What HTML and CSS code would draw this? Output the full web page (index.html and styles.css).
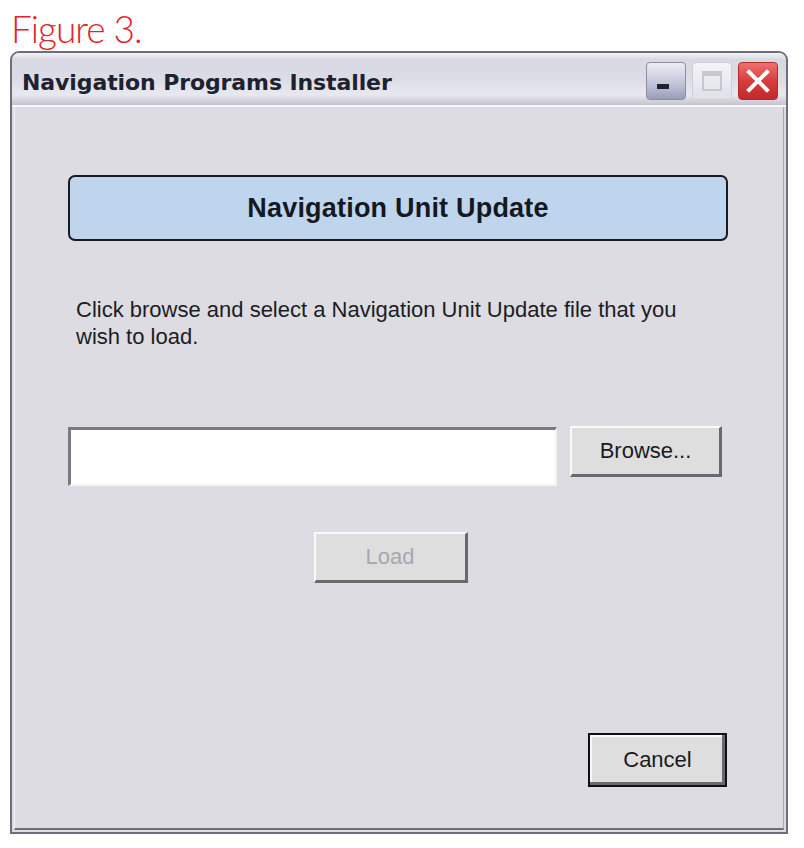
FILE: index.html
```html
<!DOCTYPE html>
<html lang="en">
<head>
    <meta charset="UTF-8">
    <title>Navigation Programs Installer</title>
    <link rel="stylesheet" href="styles.css">
</head>
<body>
    <div class="caption">Figure 3.</div>

    <div class="window">
        <!-- Title bar -->
        <div class="titlebar">
            <span class="title">Navigation Programs Installer</span>
            <div class="controls">
                <div class="ctl ctl-min"><span class="min-bar"></span></div>
                <div class="ctl ctl-max"><span class="max-box"></span></div>
                <div class="ctl ctl-close">
                    <svg width="26" height="26" viewBox="0 0 26 26">
                        <path d="M4 4 L22 22 M22 4 L4 22" stroke="#fff" stroke-width="4" stroke-linecap="square"/>
                    </svg>
                </div>
            </div>
        </div>

        <!-- Client area -->
        <div class="client">
            <div class="banner">Navigation Unit Update</div>

            <p class="intro">Click browse and select a Navigation Unit Update file that you wish to load.</p>

            <div class="file-row">
                <div class="file-input"></div>
                <button class="btn btn-browse">Browse...</button>
            </div>

            <div class="load-row">
                <button class="btn btn-load" disabled>Load</button>
            </div>

            <div class="bottom-row">
                <button class="btn btn-cancel">Cancel</button>
            </div>
        </div>
    </div>
</body>
</html>
```

FILE: styles.css
```css
body {
    margin: 0;
    background: #fff;
    font-family: "Liberation Sans", Arial, sans-serif;
}
.caption {
    font-family: Lato, "Liberation Sans", sans-serif;
    font-weight: 300;
    font-size: 37px;
    color: #e3232b;
    line-height: 1;
    padding: 10px 0 0 11px;
    height: 41px;
    letter-spacing: -1px;
}
.window {
    margin-left: 10px;
    width: 774px;
    height: 779px;
    border: 2px solid #6e6e7a;
    border-radius: 9px 9px 0 0;
    background: #dcdce2;
    display: flex;
    flex-direction: column;
}
.titlebar {
    height: 52px;
    display: flex;
    align-items: center;
    justify-content: space-between;
    padding: 0 6px 0 10px;
    border-radius: 7px 7px 0 0;
    background: linear-gradient(to bottom, #f4f4f8 0%, #d8d8e2 12%, #dcdce6 50%, #e8e8f0 80%, #c4c4ce 100%);
    border-bottom: 2px solid #f6f6fa;
}
.title {
    font-family: "DejaVu Sans", Verdana, sans-serif;
    font-weight: bold;
    font-size: 22px;
    color: #1e2230;
    letter-spacing: -0.1px;
    padding-top: 6px;
}
.controls {
    display: flex;
    gap: 6px;
    padding-top: 4px;
    margin-right: 2px;
}
.ctl {
    width: 40px;
    height: 38px;
    border-radius: 4px;
    box-sizing: border-box;
    position: relative;
    display: flex;
    align-items: center;
    justify-content: center;
}
.ctl-min {
    background: linear-gradient(to bottom, #eeeef6, #c0c2d6 60%, #9a9cb8);
    border: 1px solid #8a8ca6;
}
.min-bar {
    position: absolute;
    left: 10px;
    bottom: 10px;
    width: 12px;
    height: 5px;
    background: #1e2230;
}
.ctl-max {
    background: linear-gradient(to bottom, #f4f4f8, #e0e0ea);
    border: 1px solid #d0d0da;
}
.max-box {
    width: 20px;
    height: 20px;
    border: 2px solid #c8c8d2;
    border-top-width: 5px;
    box-sizing: border-box;
}
.ctl-close {
    background: linear-gradient(to bottom, #f07070, #d83c3c 50%, #c02a2a);
    border: 1px solid #b02a2a;
}
.client {
    flex: 1;
    margin: 0 2px 2px 2px;
    border-left: 1px solid #f2f2f6;
    border-right: 1px solid #a8a8b4;
    border-bottom: 2px solid #6e6e7a;
    padding: 68px 55px 0 53px;
    display: flex;
    flex-direction: column;
}
.banner {
    height: 62px;
    border: 2px solid #1a1a22;
    border-radius: 7px;
    background: #bed5ed;
    display: flex;
    align-items: center;
    justify-content: center;
    font-weight: bold;
    font-size: 27px;
    color: #141820;
    letter-spacing: 0.2px;
}
.intro {
    margin: 55px 0 0 8px;
    font-size: 22px;
    line-height: 27px;
    color: #1c1c22;
    max-width: 610px;
}
.file-row {
    display: flex;
    align-items: flex-start;
    margin-top: 77px;
}
.file-input {
    width: 489px;
    height: 59px;
    box-sizing: border-box;
    background: #fff;
    border-top: 3px solid #7a7a80;
    border-left: 3px solid #7a7a80;
    border-right: 2px solid #f4f4f4;
    border-bottom: 2px solid #f4f4f4;
}
.btn {
    font-family: "Liberation Sans", Arial, sans-serif;
    font-size: 22px;
    color: #1a1a22;
    background: #dededf;
    border-top: 2px solid #fafafa;
    border-left: 2px solid #fafafa;
    border-right: 3px solid #6a6a6e;
    border-bottom: 3px solid #6a6a6e;
    padding: 0;
    box-sizing: border-box;
}
.btn-browse {
    width: 152px;
    height: 51px;
    margin-left: 13px;
    margin-top: -1px;
}
.load-row {
    display: flex;
    justify-content: center;
    margin-top: 46px;
    padding-right: 15px;
}
.btn-load {
    width: 154px;
    height: 51px;
    color: #a8a8ac;
}
.bottom-row {
    display: flex;
    justify-content: flex-end;
    margin-top: auto;
    margin-bottom: 41px;
    margin-right: 1px;
}
.btn-cancel {
    width: 139px;
    height: 54px;
    border: 2px solid #101014;
    box-shadow: inset -3px -3px 0 #6a6a6e, inset 2px 2px 0 #fafafa;
}
```
